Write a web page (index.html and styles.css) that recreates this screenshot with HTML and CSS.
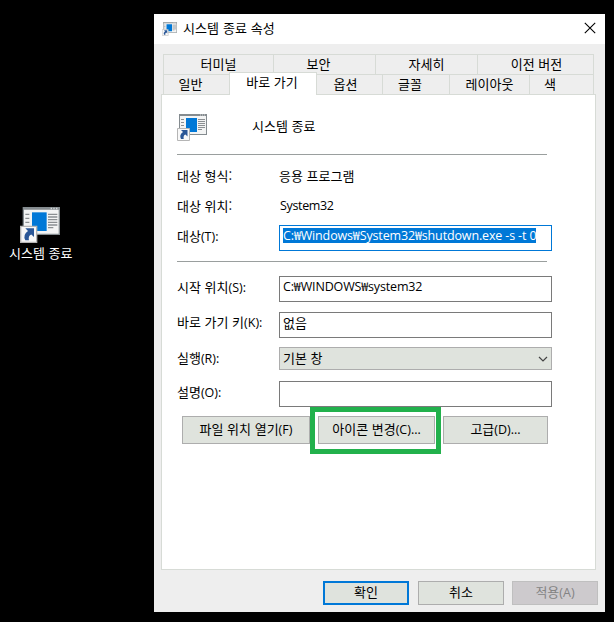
FILE: index.html
```html
<!DOCTYPE html>
<html lang="ko">
<head>
<meta charset="utf-8">
<title>시스템 종료 속성</title>
<link rel="stylesheet" href="styles.css">
</head>
<body>
<svg class="defs" aria-hidden="true">
  <symbol id="shortcut" viewBox="0 0 30 27">
    <path fill="#848b8f" d="M2 0h28v21H2z"/>
    <path fill="#f3f4f4" d="M3 2h26v18H3z"/>
    <path fill="#d5d8da" d="M23 .6h1v1h-1zM25 .6h1v1h-1zM27 .6h1v1h-1z"/>
    <path fill="#0078d7" d="M9 4h11v14H9z"/>
    <path stroke="#8b8f92" d="M4 5.500h3M4 8.500h3M4 11.500h3M21 5.500h7M21 7.500h7M21 9.500h7M21 11.500h7M21 13.500h7M21 15.500h4"/>
    <path fill="#f8f8f8" stroke="#b5b5b5" d="M.5 14.500h12v12H.5z"/>
    <path fill="#2b5797" d="M4 16h6.500v6.500L8.500 20.600Q6 21.500 6.700 25H4Q1.800 21 6 18z"/>
  </symbol>
</svg>
<div class="desktop">
  <div class="shortcut">
    <svg class="shortcut-icon"><use href="#shortcut"/></svg>
    <span>시스템 종료</span>
  </div>
</div>
<main class="window">
  <header class="titlebar">
    <svg class="title-icon"><use href="#shortcut"/></svg>
    <h1>시스템 종료 속성</h1>
    <svg class="close" viewBox="0 0 12 12"><path d="M.8.8l10.400 10.400M11.200.8L.8 11.200"/></svg>
  </header>
  <nav class="tabs">
    <div class="tab-row back">
      <span>터미널</span><span>보안</span><span>자세히</span><span>이전 버전</span>
    </div>
    <div class="tab-row front">
      <span>일반</span><span class="active">바로 가기</span><span>옵션</span><span>글꼴</span><span>레이아웃</span><span>색</span>
    </div>
  </nav>
  <section class="panel">
    <div class="head">
      <svg class="head-icon"><use href="#shortcut"/></svg>
      <span>시스템 종료</span>
    </div>
    <hr>
    <div class="row info"><label>대상 형식:</label><span>응용 프로그램</span></div>
    <div class="row info second"><label>대상 위치:</label><span class="latin system">System32</span></div>
    <div class="row target"><label>대상<i>(T):</i></label><div class="field focus"><span class="latin selected">C:₩Windows₩System32₩shutdown.exe -s -t 0</span></div></div>
    <hr>
    <div class="row start"><label>시작 위치<i>(S):</i></label><div class="field"><span class="latin path">C:₩WINDOWS₩system32</span></div></div>
    <div class="row key"><label>바로 가기 키<i>(K):</i></label><div class="field"><span class="value">없음</span></div></div>
    <div class="row run"><label>실행<i>(R):</i></label><div class="select"><span>기본 창</span><svg viewBox="0 0 10 6"><path d="M1 1l4 4 4-4"/></svg></div></div>
    <div class="row note"><label>설명<i>(O):</i></label><div class="field"></div></div>
    <div class="actions">
      <button class="open">파일 위치 열기<i>(F)</i></button>
      <div class="highlight"><button>아이콘 변경<i>(C)...</i></button></div>
      <button class="advanced">고급<i>(D)...</i></button>
    </div>
  </section>
  <footer>
    <button class="default">확인</button>
    <button>취소</button>
    <button disabled>적용<i>(A)</i></button>
  </footer>
</main>
</body>
</html>
```
FILE: styles.css
```css
* { box-sizing: border-box; }
body {
  margin: 0;
  width: 614px;
  height: 622px;
  overflow: hidden;
  background: #000;
  display: grid;
  grid-template-columns: 154px 451px;
  font: 13px/18px "Noto Sans CJK KR", sans-serif;
  color: #000;
}
i, .latin { font: 12.5px/18px "Open Sans", "Noto Sans CJK KR", sans-serif; }
.defs { position: absolute; width: 0; height: 0; }
.desktop { padding: 207px 0 0 9px; color: #fff; }
.shortcut { width: 64px; white-space: nowrap; }
.shortcut-icon { display: block; width: 40px; height: 36px; margin: 0 0 1px 11px; }
.shortcut span { display: block; }

.window {
  margin-top: 14px;
  height: 598px;
  background: #eee;
  display: flex;
  flex-direction: column;
}
.titlebar {
  height: 30px;
  flex: none;
  background: #fff;
  display: flex;
  align-items: center;
  padding: 0 9px 2px 8px;
}
.title-icon { width: 15px; height: 14px; margin-top: 2px; }
.titlebar h1 { font: inherit; margin: -1px auto 0 6px; letter-spacing: .1px; }
.close { width: 12px; height: 12px; }
.close path { fill: none; stroke: #000; stroke-width: 1.1; }

.tabs { padding: 10px 11px 0 9px; flex: none; }
.tab-row { display: grid; height: 20px; }
.back { grid-template-columns: 110px 102px 102px 117px; }
.front { grid-template-columns: 66px 88px 65px 67px 80px 65px; }
.tab-row span {
  border: 1px solid #d7dbd6;
  border-width: 1px 0 0 1px;
  text-align: center;
  line-height: 18px;
}
.tab-row span:last-child { border-right-width: 1px; }
.back span { line-height: 17px; }
.back span:nth-child(2) { padding-right: 12px; }
.back span:last-child { padding-left: 2px; }
.front span { padding-right: 12px; }
.front span:last-child { padding-right: 23px; }
.front span:nth-child(5) { padding-right: 0; }
.front .active {
  margin: -2px 0 -1px;
  background: #fff;
  border-right-width: 1px;
  padding: 0 2px 0 0;
  z-index: 1;
}
.front .active + span { border-left: 0; padding-right: 8px; }

.panel {
  margin: 0 9px 0 7px;
  height: 476px;
  flex: none;
  background: #fff;
  border: 1px solid #d7dbd6;
  padding: 19px 0 0 15px;
}
.head { display: flex; height: 40px; }
.head-icon { width: 30px; height: 27px; margin-right: 45px; }
.head span { margin-top: 3px; }
hr { width: 370px; height: 1px; border: 0; margin: 0; background: #9a9f9e; }
.row { display: grid; grid-template-columns: 102px 273px; white-space: nowrap; }
.row > label { margin-top: 2px; }
.info { padding: 12px 0 0; height: 42px; align-items: start; }
.info > label, .info > span { margin: 0; }
.info > .latin { padding-left: 1px; }
.system { letter-spacing: -.35px; }
.second { height: 28px; padding-top: 0; }
.target { margin-bottom: 10px; }
.start { margin-top: 14px; }
.key { margin-top: 10px; }
.key > label { margin-top: 1px; }
.run { margin-top: 9px; }
.note { margin-top: 11px; }
.field {
  height: 26px;
  border: 1px solid #7a7a7a;
  padding: 2px 3px;
  line-height: 18px;
}
.focus { border-color: #0078d7; }
.field span { display: block; }
.field .value { margin-top: -1px; }
.field .path { margin-top: -1px; letter-spacing: -.15px; }
.field .selected {
  background: #0078d7;
  color: #fff;
  width: 253px;
  height: 15px;
  line-height: 15px;
  letter-spacing: -.14px;
}
.select {
  height: 23px;
  background: #dfe3dd;
  border: 1px solid #adadad;
  display: flex;
  justify-content: space-between;
  align-items: center;
  padding: 0 3px 2px;
}
.select svg { width: 10px; height: 6px; margin-top: 3px; }
.select path { fill: none; stroke: #444; stroke-width: 1.2; }

button {
  background: #dfe3dd;
  border: 1px solid #adadad;
  font: inherit;
  color: #000;
  padding: 0 0 2px;
  height: 28px;
  white-space: nowrap;
}
.actions { display: flex; padding-left: 5px; align-items: flex-start; }
.open { width: 128px; margin-top: 9px; }
.highlight { width: 131px; height: 47px; border: 5px solid #22b14c; padding: 4px 0 0 3px; }
.highlight button { width: 117px; }
.advanced { width: 105px; margin: 9px 0 0 2px; }

footer { display: flex; gap: 8px; padding: 11px 7px 0 169px; }
footer button { width: 86px; height: 24px; }
footer .default { border: 2px solid #0078d7; margin-right: 1px; }
footer button:disabled { background: #cdcacd; border-color: #bfbfbf; color: #838383; }
```
